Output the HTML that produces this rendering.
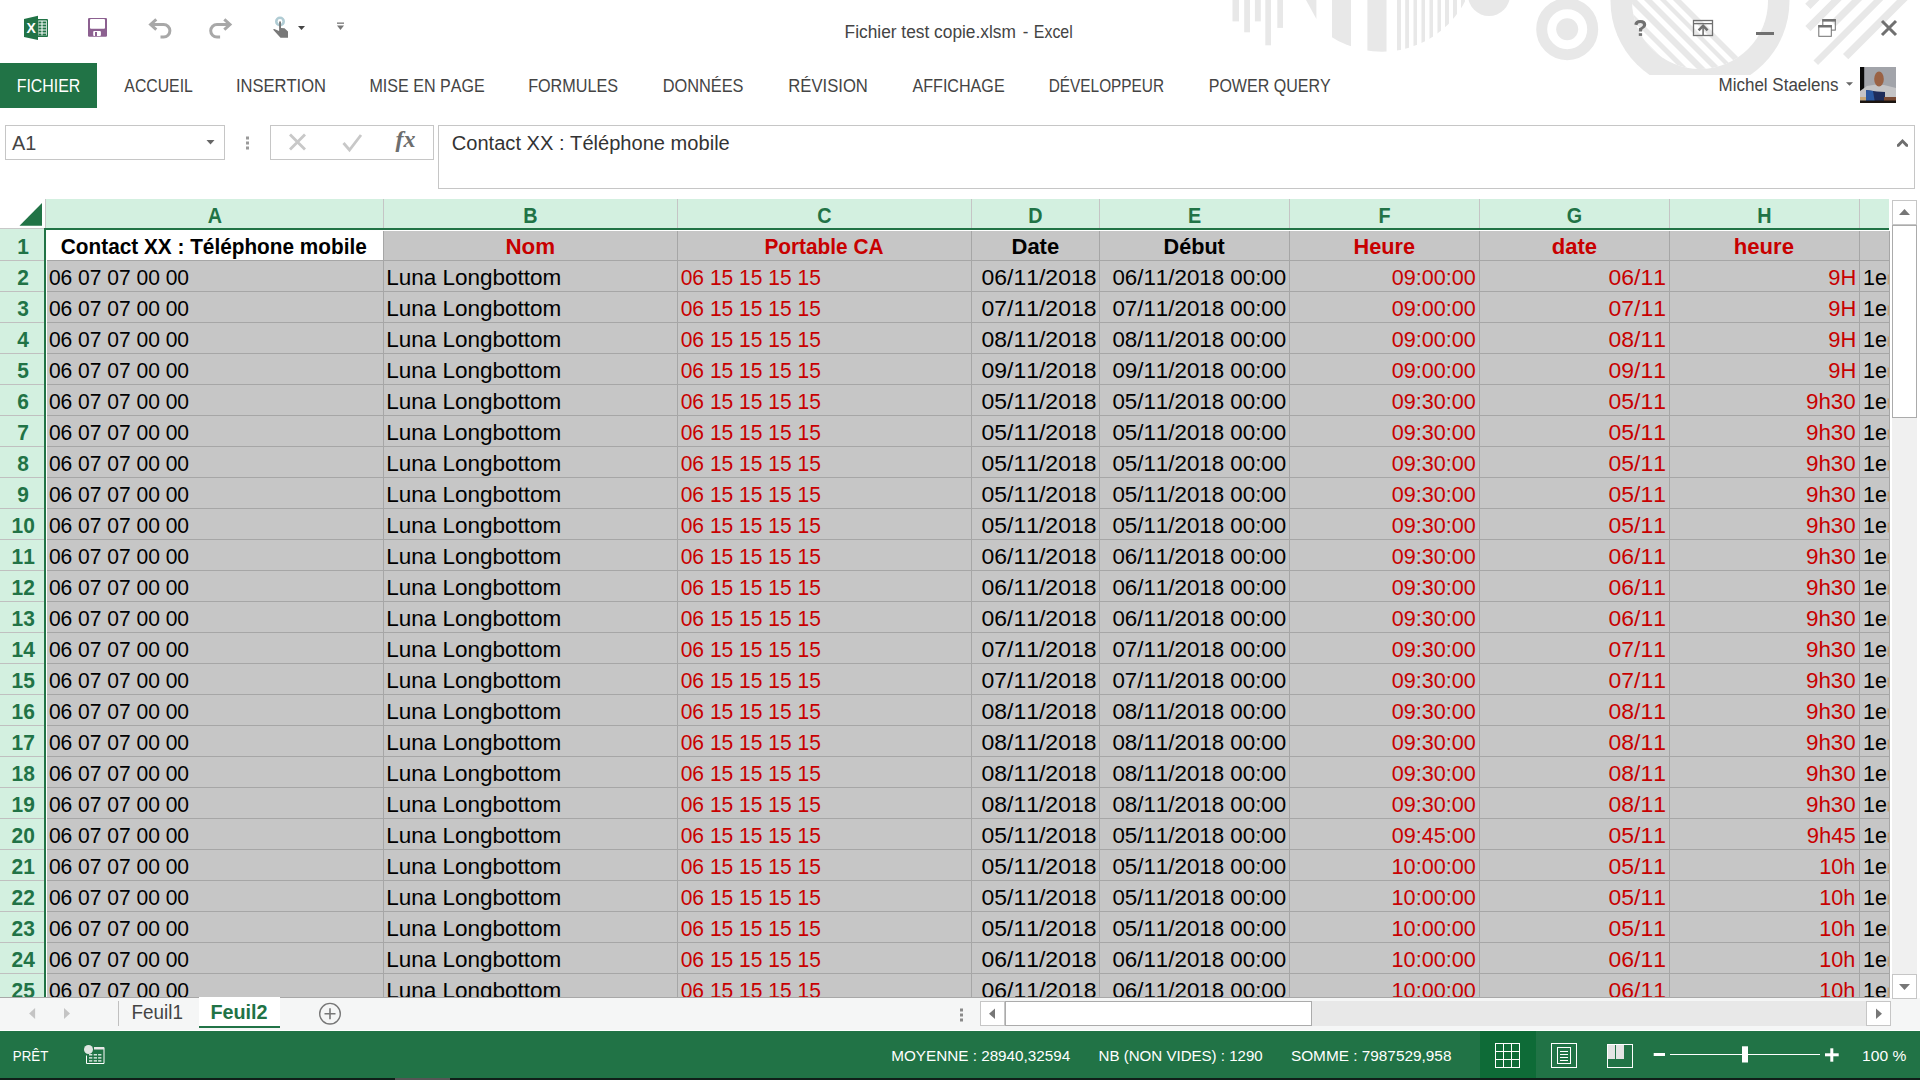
<!DOCTYPE html>
<html><head><meta charset="utf-8"><title>Excel</title>
<style>
html,body{margin:0;padding:0;background:#fff;overflow:hidden;}
svg{display:block;font-family:"Liberation Sans",sans-serif;font-kerning:none;}
svg text{white-space:pre;}
</style></head><body>
<svg width="1920" height="1080" viewBox="0 0 1920 1080">
<rect x="0" y="0" width="1920" height="1080" fill="#ffffff" />
<g><rect x="1232.5" y="0" width="6.5" height="21.4" fill="#e8e8e8"/><rect x="1244.2" y="0" width="5.7999999999999545" height="32.3" fill="#e8e8e8"/><rect x="1254.9" y="0" width="5.899999999999864" height="21.4" fill="#e8e8e8"/><rect x="1265.3" y="0" width="5.7000000000000455" height="45.3" fill="#e8e8e8"/><rect x="1277.3" y="0" width="5.7000000000000455" height="27.9" fill="#e8e8e8"/><path d="M1306 0 L1316.4 0 L1316.4 19 Z" fill="#e8e8e8"/><clipPath id="cp1"><circle cx="1382" cy="-42" r="93.7"/></clipPath><g clip-path="url(#cp1)" fill="#e8e8e8"><rect x="1332" y="-80" width="19" height="160"/><rect x="1367.4" y="-80" width="19.09999999999991" height="160"/><rect x="1397" y="-80" width="4" height="160"/><rect x="1405.2" y="-80" width="3.7999999999999545" height="160"/><rect x="1413.5" y="-80" width="3.5" height="160"/><rect x="1421.5" y="-80" width="3.5" height="160"/><rect x="1429.5" y="-80" width="3.5" height="160"/><rect x="1437.5" y="-80" width="3.5" height="160"/><rect x="1445" y="-80" width="4" height="160"/><rect x="1453" y="-80" width="4" height="160"/><rect x="1461" y="-80" width="4" height="160"/></g><circle cx="1489" cy="-5" r="21" fill="#e8e8e8"/><circle cx="1567.2" cy="29.2" r="25.5" fill="none" stroke="#e8e8e8" stroke-width="11"/><circle cx="1567.2" cy="29.2" r="11" fill="#e8e8e8"/><clipPath id="cp2b"><rect x="1500" y="-10" width="400" height="85"/></clipPath><clipPath id="cp2"><circle cx="1700" cy="1" r="68"/></clipPath><g clip-path="url(#cp2b)"><circle cx="1700" cy="1" r="89.5" fill="#e8e8e8"/><circle cx="1700" cy="1" r="68" fill="#ffffff"/><g clip-path="url(#cp2)" fill="#e8e8e8"><path d="M1300 -100 L1600 200 L1804 200 L1504 -100 Z"/><path d="M1512 -100 L1812 200 L1819 200 L1519 -100 Z"/><path d="M1528 -100 L1828 200 L1837 200 L1537 -100 Z"/><path d="M1544 -100 L1844 200 L1852 200 L1552 -100 Z"/><path d="M1560 -100 L1860 200 L1866 200 L1566 -100 Z"/><path d="M1573 -100 L1873 200 L1881 200 L1581 -100 Z"/></g></g><g fill="#e8e8e8"><path d="M1805.2 3.8 L1810.5 9.0 L1959.7 -140.3 L1954.5 -145.5 Z"/><path d="M1805.3 26.1 L1810.5 31.2 L1970.8 -129.1 L1965.7 -134.3 Z"/><path d="M1831.0 21.0 L1836.0 26.0 L1981.0 -119.0 L1976.0 -124.0 Z"/><path d="M1813.5 60.5 L1818.1 65.1 L1991.6 -108.4 L1987.0 -113.0 Z"/><path d="M1843.0 54.0 L1848.3 59.3 L2003.8 -96.2 L1998.5 -101.5 Z"/></g></g>
<path d="M24 19 L38 15.8 L38 40 L24 37 Z" fill="#217346"/>
<rect x="37" y="19" width="11" height="18" rx="1" fill="#217346"/>
<rect x="38.3" y="20.5" width="8.5" height="15" fill="#ffffff"/>
<rect x="38.5" y="21.5" width="3" height="2" fill="#217346"/><rect x="42.5" y="21.5" width="3.6" height="2" fill="#217346"/>
<rect x="38.5" y="24.5" width="3" height="2" fill="#217346"/><rect x="42.5" y="24.5" width="3.6" height="2" fill="#217346"/>
<rect x="38.5" y="27.5" width="3" height="2" fill="#217346"/><rect x="42.5" y="27.5" width="3.6" height="2" fill="#217346"/>
<rect x="38.5" y="30.5" width="3" height="2" fill="#217346"/><rect x="42.5" y="30.5" width="3.6" height="2" fill="#217346"/>
<rect x="38.5" y="33.5" width="3" height="2" fill="#217346"/><rect x="42.5" y="33.5" width="3.6" height="2" fill="#217346"/>
<text x="26.5" y="33" font-size="14" font-weight="bold" fill="#ffffff">X</text>
<rect x="88" y="17.9" width="19" height="18.9" rx="1.2" fill="#8c6090"/>
<rect x="90" y="19" width="15" height="9.7" rx="1" fill="#ffffff"/>
<rect x="93.2" y="30.9" width="7.7" height="5" rx="1" fill="#ffffff"/><rect x="95" y="32" width="2" height="4" fill="#8c6090"/>
<path d="M151 24.5 L163.6 24.5 A6.3 6.3 0 0 1 163.6 37.1 L160.5 37.1" fill="none" stroke="#a8a8a8" stroke-width="3"/>
<path d="M156.3 19.3 L150.6 24.5 L156.3 29.7" fill="none" stroke="#a8a8a8" stroke-width="3"/>
<path d="M229.6 24.5 L217 24.5 A6.3 6.3 0 0 0 217 37.1 L220.1 37.1" fill="none" stroke="#a8a8a8" stroke-width="3"/>
<path d="M224.3 19.3 L230 24.5 L224.3 29.7" fill="none" stroke="#a8a8a8" stroke-width="3"/>
<circle cx="280" cy="21.5" r="3.7" fill="none" stroke="#b0ccd4" stroke-width="2.6"/>
<path d="M279.1 22.2 Q279.1 21.3 280.05 21.3 Q281 21.3 281 22.2 L281 28 L284.5 28.3 L288 31.5 L288 37.8 L280.5 37.8 L273 29.5 L274.3 29 L279.1 31 Z" fill="#787878"/>
<path d="M298 26 L305 26 L301.5 30 Z" fill="#444444"/>
<rect x="337" y="22.5" width="7" height="1.3" fill="#777"/><path d="M337 25.5 L344 25.5 L340.5 30 Z" fill="#777777"/>
<text transform="matrix(0.9239 0 0 1 844.58 38)" font-size="18.75" font-weight="normal" fill="#444444" >Fichier test copie.xlsm</text>
<text transform="matrix(0.8956 0 0 1 1022.85 38)" font-size="18.75" font-weight="normal" fill="#444444" >-</text>
<text transform="matrix(0.8500 0 0 1 1033.79 38)" font-size="18.75" font-weight="normal" fill="#444444" >Excel</text>
<path d="M1634.3 24.6 Q1634.6 19.9 1640.3 19.9 Q1646.2 19.9 1646.2 24.6 Q1646.2 27.6 1642.3 29.4 L1642.1 31.6 L1638.9 31.6 L1638.9 28.2 Q1643 26.6 1643 24.7 Q1643 22.9 1640.3 22.9 Q1637.6 22.9 1637.4 25.3 Z" fill="#707070"/><rect x="1638.8" y="33.2" width="3.3" height="2.7" fill="#707070"/>
<rect x="1693.5" y="20.5" width="19" height="15" fill="none" stroke="#707070" stroke-width="1.3"/>
<rect x="1694" y="23" width="18" height="1.3" fill="#707070"/>
<path d="M1703.1 35.5 L1703.1 26.5" stroke="#707070" stroke-width="1.6"/><path d="M1698.6 30.3 L1703.1 25.8 L1707.6 30.3" fill="none" stroke="#707070" stroke-width="2.6"/>
<rect x="1756" y="32" width="18" height="3" fill="#707070"/>
<rect x="1822.8" y="19.6" width="12.5" height="10.5" fill="none" stroke="#707070" stroke-width="1"/><rect x="1822.3" y="19.1" width="13.5" height="2.5" fill="#707070"/>
<rect x="1818.8" y="25.5" width="12.5" height="10.8" fill="#ffffff" stroke="#707070" stroke-width="1"/><rect x="1818.3" y="25" width="13.5" height="2.5" fill="#707070"/>
<path d="M1882 21 L1896 35 M1896 21 L1882 35" stroke="#707070" stroke-width="3"/>
<rect x="0" y="63" width="97" height="45" fill="#217346" />
<text transform="matrix(0.8420 0 0 1 16.69 92)" font-size="18.90" font-weight="normal" fill="#ffffff" >FICHIER</text>
<text transform="matrix(0.8358 0 0 1 124.37 92)" font-size="18.90" font-weight="normal" fill="#444444" >ACCUEIL</text>
<text transform="matrix(0.8755 0 0 1 235.97 92)" font-size="18.90" font-weight="normal" fill="#444444" >INSERTION</text>
<text transform="matrix(0.8505 0 0 1 369.48 92)" font-size="18.90" font-weight="normal" fill="#444444" >MISE EN PAGE</text>
<text transform="matrix(0.8560 0 0 1 528.17 92)" font-size="18.90" font-weight="normal" fill="#444444" >FORMULES</text>
<text transform="matrix(0.8657 0 0 1 662.66 92)" font-size="18.90" font-weight="normal" fill="#444444" >DONNÉES</text>
<text transform="matrix(0.8818 0 0 1 788.33 92)" font-size="18.90" font-weight="normal" fill="#444444" >RÉVISION</text>
<text transform="matrix(0.8529 0 0 1 912.47 92)" font-size="18.90" font-weight="normal" fill="#444444" >AFFICHAGE</text>
<text transform="matrix(0.8139 0 0 1 1048.74 92)" font-size="18.90" font-weight="normal" fill="#444444" >DÉVELOPPEUR</text>
<text transform="matrix(0.8480 0 0 1 1208.69 92)" font-size="18.90" font-weight="normal" fill="#444444" >POWER QUERY</text>
<text transform="matrix(0.8997 0 0 1 1718.51 91)" font-size="18.90" font-weight="normal" fill="#444444" >Michel Staelens</text>
<path d="M1846 82.2 L1853 82.2 L1849.5 85.8 Z" fill="#666666"/>
<g>
<rect x="1860" y="67" width="36" height="36" fill="#a2a4aa" />
<rect x="1860" y="67" width="4.2" height="24" fill="#0a0a0a" />
<path d="M1860 91 L1867 86 L1876 84.5 L1884 85 L1896 88 L1896 97 L1860 97 Z" fill="#c4c4c6"/>
<ellipse cx="1879" cy="79" rx="4.8" ry="7.4" fill="#9a6244"/>
<path d="M1866 90 L1877 91.5 L1885 92 L1885 103 L1866 103 Z" fill="#1e2c5a"/>
<path d="M1866 90 L1873 91 L1875 103 L1866 103 Z" fill="#2a58a0"/>
<rect x="1860" y="97" width="6" height="3.5" fill="#c8a878" />
<rect x="1884" y="97" width="12" height="6" fill="#7a4a34" />
<rect x="1860" y="100.5" width="36" height="2.5" fill="#1a1410" />
</g>
<rect x="5.5" y="125.5" width="219" height="34" fill="#ffffff" stroke="#c6c6c6" stroke-width="1"/>
<text transform="matrix(0.9746 0 0 1 11.96 150)" font-size="20.35" font-weight="normal" fill="#444444" >A1</text>
<path d="M206.5 140 L214.5 140 L210.5 144.5 Z" fill="#666666"/>
<rect x="246" y="136.5" width="3" height="3" fill="#9a9a9a" />
<rect x="246" y="141.5" width="3" height="3" fill="#9a9a9a" />
<rect x="246" y="146.5" width="3" height="3" fill="#9a9a9a" />
<rect x="270.5" y="125.5" width="163" height="34" fill="#ffffff" stroke="#c6c6c6" stroke-width="1"/>
<path d="M290 134.5 L305 149.5 M305 134.5 L290 149.5" stroke="#c8c8c8" stroke-width="2.8"/>
<path d="M343.5 143 L349.5 150 L361 135" fill="none" stroke="#c8c8c8" stroke-width="2.8"/>
<text x="395.5" y="147" font-family="Liberation Serif" font-style="italic" font-weight="bold" font-size="24" fill="#6e6e6e">fx</text>
<rect x="438.5" y="125.5" width="1476" height="63" fill="#ffffff" stroke="#c6c6c6" stroke-width="1"/>
<text transform="matrix(1.0165 0 0 1 451.78 149.7)" font-size="19.77" font-weight="normal" fill="#333333" >Contact XX : Téléphone mobile</text>
<path d="M1902.5 139 L1908 144.5 L1908 146.7 L1906 146.7 L1902.5 143 L1899 146.7 L1897 146.7 L1897 144.5 Z" fill="#6e6e6e"/>
<path d="M19.5 225.8 L42 203 L42 225.8 Z" fill="#217346"/>
<rect x="0" y="228" width="45" height="1" fill="#c8c8c8" />
<rect x="45" y="199" width="1" height="29" fill="#c8c8c8" />
<rect x="46" y="199" width="1843" height="29" fill="#d3f0e0" />
<rect x="383" y="199" width="1" height="29" fill="#c5c5c5" />
<rect x="677" y="199" width="1" height="29" fill="#c5c5c5" />
<rect x="971" y="199" width="1" height="29" fill="#c5c5c5" />
<rect x="1099" y="199" width="1" height="29" fill="#c5c5c5" />
<rect x="1289" y="199" width="1" height="29" fill="#c5c5c5" />
<rect x="1479" y="199" width="1" height="29" fill="#c5c5c5" />
<rect x="1669" y="199" width="1" height="29" fill="#c5c5c5" />
<rect x="1859" y="199" width="1" height="29" fill="#c5c5c5" />
<rect x="45" y="228" width="1844" height="2" fill="#217346" />
<rect x="0" y="229" width="44" height="768" fill="#d3f0e0" />
<rect x="0" y="260" width="44" height="1" fill="#c0c0c0" />
<rect x="0" y="291" width="44" height="1" fill="#c0c0c0" />
<rect x="0" y="322" width="44" height="1" fill="#c0c0c0" />
<rect x="0" y="353" width="44" height="1" fill="#c0c0c0" />
<rect x="0" y="384" width="44" height="1" fill="#c0c0c0" />
<rect x="0" y="415" width="44" height="1" fill="#c0c0c0" />
<rect x="0" y="446" width="44" height="1" fill="#c0c0c0" />
<rect x="0" y="477" width="44" height="1" fill="#c0c0c0" />
<rect x="0" y="508" width="44" height="1" fill="#c0c0c0" />
<rect x="0" y="539" width="44" height="1" fill="#c0c0c0" />
<rect x="0" y="570" width="44" height="1" fill="#c0c0c0" />
<rect x="0" y="601" width="44" height="1" fill="#c0c0c0" />
<rect x="0" y="632" width="44" height="1" fill="#c0c0c0" />
<rect x="0" y="663" width="44" height="1" fill="#c0c0c0" />
<rect x="0" y="694" width="44" height="1" fill="#c0c0c0" />
<rect x="0" y="725" width="44" height="1" fill="#c0c0c0" />
<rect x="0" y="756" width="44" height="1" fill="#c0c0c0" />
<rect x="0" y="787" width="44" height="1" fill="#c0c0c0" />
<rect x="0" y="818" width="44" height="1" fill="#c0c0c0" />
<rect x="0" y="849" width="44" height="1" fill="#c0c0c0" />
<rect x="0" y="880" width="44" height="1" fill="#c0c0c0" />
<rect x="0" y="911" width="44" height="1" fill="#c0c0c0" />
<rect x="0" y="942" width="44" height="1" fill="#c0c0c0" />
<rect x="0" y="973" width="44" height="1" fill="#c0c0c0" />
<rect x="44" y="228" width="2" height="769" fill="#217346" />
<rect x="46" y="230" width="1843" height="767" fill="#ffffff" />
<rect x="47" y="231" width="1842" height="766" fill="#c6c6c6" />
<rect x="47" y="231" width="336" height="29" fill="#ffffff" />
<rect x="383" y="231" width="1" height="766" fill="#a6a6a6" />
<rect x="677" y="231" width="1" height="766" fill="#a6a6a6" />
<rect x="971" y="231" width="1" height="766" fill="#a6a6a6" />
<rect x="1099" y="231" width="1" height="766" fill="#a6a6a6" />
<rect x="1289" y="231" width="1" height="766" fill="#a6a6a6" />
<rect x="1479" y="231" width="1" height="766" fill="#a6a6a6" />
<rect x="1669" y="231" width="1" height="766" fill="#a6a6a6" />
<rect x="1859" y="231" width="1" height="766" fill="#a6a6a6" />
<rect x="1889" y="231" width="1" height="766" fill="#a6a6a6" />
<rect x="47" y="260" width="1842" height="1" fill="#a6a6a6" />
<rect x="47" y="291" width="1842" height="1" fill="#a6a6a6" />
<rect x="47" y="322" width="1842" height="1" fill="#a6a6a6" />
<rect x="47" y="353" width="1842" height="1" fill="#a6a6a6" />
<rect x="47" y="384" width="1842" height="1" fill="#a6a6a6" />
<rect x="47" y="415" width="1842" height="1" fill="#a6a6a6" />
<rect x="47" y="446" width="1842" height="1" fill="#a6a6a6" />
<rect x="47" y="477" width="1842" height="1" fill="#a6a6a6" />
<rect x="47" y="508" width="1842" height="1" fill="#a6a6a6" />
<rect x="47" y="539" width="1842" height="1" fill="#a6a6a6" />
<rect x="47" y="570" width="1842" height="1" fill="#a6a6a6" />
<rect x="47" y="601" width="1842" height="1" fill="#a6a6a6" />
<rect x="47" y="632" width="1842" height="1" fill="#a6a6a6" />
<rect x="47" y="663" width="1842" height="1" fill="#a6a6a6" />
<rect x="47" y="694" width="1842" height="1" fill="#a6a6a6" />
<rect x="47" y="725" width="1842" height="1" fill="#a6a6a6" />
<rect x="47" y="756" width="1842" height="1" fill="#a6a6a6" />
<rect x="47" y="787" width="1842" height="1" fill="#a6a6a6" />
<rect x="47" y="818" width="1842" height="1" fill="#a6a6a6" />
<rect x="47" y="849" width="1842" height="1" fill="#a6a6a6" />
<rect x="47" y="880" width="1842" height="1" fill="#a6a6a6" />
<rect x="47" y="911" width="1842" height="1" fill="#a6a6a6" />
<rect x="47" y="942" width="1842" height="1" fill="#a6a6a6" />
<rect x="47" y="973" width="1842" height="1" fill="#a6a6a6" />
<rect x="0" y="997" width="1890" height="1" fill="#a8a8a8" />
<text x="215.0" y="223" text-anchor="middle" font-size="21.5" font-weight="bold" fill="#217346" transform="translate(215.0 0) scale(0.92 1) translate(-215.0 0)">A</text>
<text x="530.5" y="223" text-anchor="middle" font-size="21.5" font-weight="bold" fill="#217346" transform="translate(530.5 0) scale(0.92 1) translate(-530.5 0)">B</text>
<text x="824.5" y="223" text-anchor="middle" font-size="21.5" font-weight="bold" fill="#217346" transform="translate(824.5 0) scale(0.92 1) translate(-824.5 0)">C</text>
<text x="1035.5" y="223" text-anchor="middle" font-size="21.5" font-weight="bold" fill="#217346" transform="translate(1035.5 0) scale(0.92 1) translate(-1035.5 0)">D</text>
<text x="1194.5" y="223" text-anchor="middle" font-size="21.5" font-weight="bold" fill="#217346" transform="translate(1194.5 0) scale(0.92 1) translate(-1194.5 0)">E</text>
<text x="1384.5" y="223" text-anchor="middle" font-size="21.5" font-weight="bold" fill="#217346" transform="translate(1384.5 0) scale(0.92 1) translate(-1384.5 0)">F</text>
<text x="1574.5" y="223" text-anchor="middle" font-size="21.5" font-weight="bold" fill="#217346" transform="translate(1574.5 0) scale(0.92 1) translate(-1574.5 0)">G</text>
<text x="1764.5" y="223" text-anchor="middle" font-size="21.5" font-weight="bold" fill="#217346" transform="translate(1764.5 0) scale(0.92 1) translate(-1764.5 0)">H</text>
<clipPath id="rhclip"><rect x="0" y="229" width="44" height="768"/></clipPath>
<g clip-path="url(#rhclip)">
<text x="23.2" y="254.5" text-anchor="middle" font-size="21.8" font-weight="bold" fill="#217346" transform="translate(23.2 0) scale(0.96 1) translate(-23.2 0)">1</text>
<text x="23.2" y="285.5" text-anchor="middle" font-size="21.8" font-weight="bold" fill="#217346" transform="translate(23.2 0) scale(0.96 1) translate(-23.2 0)">2</text>
<text x="23.2" y="316.5" text-anchor="middle" font-size="21.8" font-weight="bold" fill="#217346" transform="translate(23.2 0) scale(0.96 1) translate(-23.2 0)">3</text>
<text x="23.2" y="347.5" text-anchor="middle" font-size="21.8" font-weight="bold" fill="#217346" transform="translate(23.2 0) scale(0.96 1) translate(-23.2 0)">4</text>
<text x="23.2" y="378.5" text-anchor="middle" font-size="21.8" font-weight="bold" fill="#217346" transform="translate(23.2 0) scale(0.96 1) translate(-23.2 0)">5</text>
<text x="23.2" y="409.5" text-anchor="middle" font-size="21.8" font-weight="bold" fill="#217346" transform="translate(23.2 0) scale(0.96 1) translate(-23.2 0)">6</text>
<text x="23.2" y="440.5" text-anchor="middle" font-size="21.8" font-weight="bold" fill="#217346" transform="translate(23.2 0) scale(0.96 1) translate(-23.2 0)">7</text>
<text x="23.2" y="471.5" text-anchor="middle" font-size="21.8" font-weight="bold" fill="#217346" transform="translate(23.2 0) scale(0.96 1) translate(-23.2 0)">8</text>
<text x="23.2" y="502.5" text-anchor="middle" font-size="21.8" font-weight="bold" fill="#217346" transform="translate(23.2 0) scale(0.96 1) translate(-23.2 0)">9</text>
<text x="23.2" y="533.5" text-anchor="middle" font-size="21.8" font-weight="bold" fill="#217346" transform="translate(23.2 0) scale(0.96 1) translate(-23.2 0)">10</text>
<text x="23.2" y="564.5" text-anchor="middle" font-size="21.8" font-weight="bold" fill="#217346" transform="translate(23.2 0) scale(0.96 1) translate(-23.2 0)">11</text>
<text x="23.2" y="595.5" text-anchor="middle" font-size="21.8" font-weight="bold" fill="#217346" transform="translate(23.2 0) scale(0.96 1) translate(-23.2 0)">12</text>
<text x="23.2" y="626.5" text-anchor="middle" font-size="21.8" font-weight="bold" fill="#217346" transform="translate(23.2 0) scale(0.96 1) translate(-23.2 0)">13</text>
<text x="23.2" y="657.5" text-anchor="middle" font-size="21.8" font-weight="bold" fill="#217346" transform="translate(23.2 0) scale(0.96 1) translate(-23.2 0)">14</text>
<text x="23.2" y="688.5" text-anchor="middle" font-size="21.8" font-weight="bold" fill="#217346" transform="translate(23.2 0) scale(0.96 1) translate(-23.2 0)">15</text>
<text x="23.2" y="719.5" text-anchor="middle" font-size="21.8" font-weight="bold" fill="#217346" transform="translate(23.2 0) scale(0.96 1) translate(-23.2 0)">16</text>
<text x="23.2" y="750.5" text-anchor="middle" font-size="21.8" font-weight="bold" fill="#217346" transform="translate(23.2 0) scale(0.96 1) translate(-23.2 0)">17</text>
<text x="23.2" y="781.5" text-anchor="middle" font-size="21.8" font-weight="bold" fill="#217346" transform="translate(23.2 0) scale(0.96 1) translate(-23.2 0)">18</text>
<text x="23.2" y="812.5" text-anchor="middle" font-size="21.8" font-weight="bold" fill="#217346" transform="translate(23.2 0) scale(0.96 1) translate(-23.2 0)">19</text>
<text x="23.2" y="843.5" text-anchor="middle" font-size="21.8" font-weight="bold" fill="#217346" transform="translate(23.2 0) scale(0.96 1) translate(-23.2 0)">20</text>
<text x="23.2" y="874.5" text-anchor="middle" font-size="21.8" font-weight="bold" fill="#217346" transform="translate(23.2 0) scale(0.96 1) translate(-23.2 0)">21</text>
<text x="23.2" y="905.5" text-anchor="middle" font-size="21.8" font-weight="bold" fill="#217346" transform="translate(23.2 0) scale(0.96 1) translate(-23.2 0)">22</text>
<text x="23.2" y="936.5" text-anchor="middle" font-size="21.8" font-weight="bold" fill="#217346" transform="translate(23.2 0) scale(0.96 1) translate(-23.2 0)">23</text>
<text x="23.2" y="967.5" text-anchor="middle" font-size="21.8" font-weight="bold" fill="#217346" transform="translate(23.2 0) scale(0.96 1) translate(-23.2 0)">24</text>
<text x="23.2" y="998.5" text-anchor="middle" font-size="21.8" font-weight="bold" fill="#217346" transform="translate(23.2 0) scale(0.96 1) translate(-23.2 0)">25</text>
</g>
<text transform="matrix(0.9666 0 0 1 60.85 253.5)" font-size="21.51" font-weight="bold" fill="#000000" >Contact XX : Téléphone mobile</text>
<text transform="matrix(1.0404 0 0 1 505.40 253.5)" font-size="21.51" font-weight="bold" fill="#c80000" >Nom</text>
<text transform="matrix(0.9685 0 0 1 764.41 253.5)" font-size="21.51" font-weight="bold" fill="#c80000" >Portable CA</text>
<text transform="matrix(1.0213 0 0 1 1011.53 253.5)" font-size="21.51" font-weight="bold" fill="#000000" >Date</text>
<text transform="matrix(1.0060 0 0 1 1163.55 253.5)" font-size="21.51" font-weight="bold" fill="#000000" >Début</text>
<text transform="matrix(1.0085 0 0 1 1353.55 253.5)" font-size="21.51" font-weight="bold" fill="#c80000" >Heure</text>
<text transform="matrix(1.0255 0 0 1 1551.80 253.5)" font-size="21.51" font-weight="bold" fill="#c80000" >date</text>
<text transform="matrix(1.0294 0 0 1 1733.75 253.5)" font-size="21.51" font-weight="bold" fill="#c80000" >heure</text>
<clipPath id="gridclip"><rect x="46" y="230" width="1843" height="767"/></clipPath>
<g clip-path="url(#gridclip)">
<text transform="matrix(0.9770 0 0 1 48.88 284.5)" font-size="21.51" font-weight="normal" fill="#000000" >06 07 07 00 00</text>
<text transform="matrix(1.0464 0 0 1 386.25 284.5)" font-size="21.51" font-weight="normal" fill="#000000" >Luna Longbottom</text>
<text transform="matrix(0.9774 0 0 1 680.68 284.5)" font-size="21.51" font-weight="normal" fill="#c80000" >06 15 15 15 15</text>
<text transform="matrix(1.0681 0 0 1 981.50 284.5)" font-size="21.51" font-weight="normal" fill="#000000" >06/11/2018</text>
<text transform="matrix(1.0386 0 0 1 1112.43 284.5)" font-size="21.51" font-weight="normal" fill="#000000" >06/11/2018 00:00</text>
<text transform="matrix(1.0030 0 0 1 1391.86 284.5)" font-size="21.51" font-weight="normal" fill="#c80000" >09:00:00</text>
<text transform="matrix(1.0666 0 0 1 1608.60 284.5)" font-size="21.51" font-weight="normal" fill="#c80000" >06/11</text>
<text transform="matrix(1.0187 0 0 1 1828.37 284.5)" font-size="21.51" font-weight="normal" fill="#c80000" >9H</text>
<text transform="matrix(1.0031 0 0 1 1862.96 284.5)" font-size="21.51" font-weight="normal" fill="#000000" >1e</text>
<rect x="1887.5" y="274.5" width="1.5" height="10" fill="#c8a070" />
<text transform="matrix(0.9770 0 0 1 48.88 315.5)" font-size="21.51" font-weight="normal" fill="#000000" >06 07 07 00 00</text>
<text transform="matrix(1.0464 0 0 1 386.25 315.5)" font-size="21.51" font-weight="normal" fill="#000000" >Luna Longbottom</text>
<text transform="matrix(0.9774 0 0 1 680.68 315.5)" font-size="21.51" font-weight="normal" fill="#c80000" >06 15 15 15 15</text>
<text transform="matrix(1.0681 0 0 1 981.50 315.5)" font-size="21.51" font-weight="normal" fill="#000000" >07/11/2018</text>
<text transform="matrix(1.0386 0 0 1 1112.43 315.5)" font-size="21.51" font-weight="normal" fill="#000000" >07/11/2018 00:00</text>
<text transform="matrix(1.0030 0 0 1 1391.86 315.5)" font-size="21.51" font-weight="normal" fill="#c80000" >09:00:00</text>
<text transform="matrix(1.0666 0 0 1 1608.60 315.5)" font-size="21.51" font-weight="normal" fill="#c80000" >07/11</text>
<text transform="matrix(1.0187 0 0 1 1828.37 315.5)" font-size="21.51" font-weight="normal" fill="#c80000" >9H</text>
<text transform="matrix(1.0031 0 0 1 1862.96 315.5)" font-size="21.51" font-weight="normal" fill="#000000" >1e</text>
<rect x="1887.5" y="305.5" width="1.5" height="10" fill="#c8a070" />
<text transform="matrix(0.9770 0 0 1 48.88 346.5)" font-size="21.51" font-weight="normal" fill="#000000" >06 07 07 00 00</text>
<text transform="matrix(1.0464 0 0 1 386.25 346.5)" font-size="21.51" font-weight="normal" fill="#000000" >Luna Longbottom</text>
<text transform="matrix(0.9774 0 0 1 680.68 346.5)" font-size="21.51" font-weight="normal" fill="#c80000" >06 15 15 15 15</text>
<text transform="matrix(1.0681 0 0 1 981.50 346.5)" font-size="21.51" font-weight="normal" fill="#000000" >08/11/2018</text>
<text transform="matrix(1.0386 0 0 1 1112.43 346.5)" font-size="21.51" font-weight="normal" fill="#000000" >08/11/2018 00:00</text>
<text transform="matrix(1.0030 0 0 1 1391.86 346.5)" font-size="21.51" font-weight="normal" fill="#c80000" >09:00:00</text>
<text transform="matrix(1.0666 0 0 1 1608.60 346.5)" font-size="21.51" font-weight="normal" fill="#c80000" >08/11</text>
<text transform="matrix(1.0187 0 0 1 1828.37 346.5)" font-size="21.51" font-weight="normal" fill="#c80000" >9H</text>
<text transform="matrix(1.0031 0 0 1 1862.96 346.5)" font-size="21.51" font-weight="normal" fill="#000000" >1e</text>
<rect x="1887.5" y="336.5" width="1.5" height="10" fill="#c8a070" />
<text transform="matrix(0.9770 0 0 1 48.88 377.5)" font-size="21.51" font-weight="normal" fill="#000000" >06 07 07 00 00</text>
<text transform="matrix(1.0464 0 0 1 386.25 377.5)" font-size="21.51" font-weight="normal" fill="#000000" >Luna Longbottom</text>
<text transform="matrix(0.9774 0 0 1 680.68 377.5)" font-size="21.51" font-weight="normal" fill="#c80000" >06 15 15 15 15</text>
<text transform="matrix(1.0681 0 0 1 981.50 377.5)" font-size="21.51" font-weight="normal" fill="#000000" >09/11/2018</text>
<text transform="matrix(1.0386 0 0 1 1112.43 377.5)" font-size="21.51" font-weight="normal" fill="#000000" >09/11/2018 00:00</text>
<text transform="matrix(1.0030 0 0 1 1391.86 377.5)" font-size="21.51" font-weight="normal" fill="#c80000" >09:00:00</text>
<text transform="matrix(1.0666 0 0 1 1608.60 377.5)" font-size="21.51" font-weight="normal" fill="#c80000" >09/11</text>
<text transform="matrix(1.0187 0 0 1 1828.37 377.5)" font-size="21.51" font-weight="normal" fill="#c80000" >9H</text>
<text transform="matrix(1.0031 0 0 1 1862.96 377.5)" font-size="21.51" font-weight="normal" fill="#000000" >1e</text>
<rect x="1887.5" y="367.5" width="1.5" height="10" fill="#c8a070" />
<text transform="matrix(0.9770 0 0 1 48.88 408.5)" font-size="21.51" font-weight="normal" fill="#000000" >06 07 07 00 00</text>
<text transform="matrix(1.0464 0 0 1 386.25 408.5)" font-size="21.51" font-weight="normal" fill="#000000" >Luna Longbottom</text>
<text transform="matrix(0.9774 0 0 1 680.68 408.5)" font-size="21.51" font-weight="normal" fill="#c80000" >06 15 15 15 15</text>
<text transform="matrix(1.0681 0 0 1 981.50 408.5)" font-size="21.51" font-weight="normal" fill="#000000" >05/11/2018</text>
<text transform="matrix(1.0386 0 0 1 1112.43 408.5)" font-size="21.51" font-weight="normal" fill="#000000" >05/11/2018 00:00</text>
<text transform="matrix(1.0030 0 0 1 1391.86 408.5)" font-size="21.51" font-weight="normal" fill="#c80000" >09:30:00</text>
<text transform="matrix(1.0666 0 0 1 1608.60 408.5)" font-size="21.51" font-weight="normal" fill="#c80000" >05/11</text>
<text transform="matrix(1.0411 0 0 1 1805.95 408.5)" font-size="21.51" font-weight="normal" fill="#c80000" >9h30</text>
<text transform="matrix(1.0031 0 0 1 1862.96 408.5)" font-size="21.51" font-weight="normal" fill="#000000" >1e</text>
<rect x="1887.5" y="398.5" width="1.5" height="10" fill="#c8a070" />
<text transform="matrix(0.9770 0 0 1 48.88 439.5)" font-size="21.51" font-weight="normal" fill="#000000" >06 07 07 00 00</text>
<text transform="matrix(1.0464 0 0 1 386.25 439.5)" font-size="21.51" font-weight="normal" fill="#000000" >Luna Longbottom</text>
<text transform="matrix(0.9774 0 0 1 680.68 439.5)" font-size="21.51" font-weight="normal" fill="#c80000" >06 15 15 15 15</text>
<text transform="matrix(1.0681 0 0 1 981.50 439.5)" font-size="21.51" font-weight="normal" fill="#000000" >05/11/2018</text>
<text transform="matrix(1.0386 0 0 1 1112.43 439.5)" font-size="21.51" font-weight="normal" fill="#000000" >05/11/2018 00:00</text>
<text transform="matrix(1.0030 0 0 1 1391.86 439.5)" font-size="21.51" font-weight="normal" fill="#c80000" >09:30:00</text>
<text transform="matrix(1.0666 0 0 1 1608.60 439.5)" font-size="21.51" font-weight="normal" fill="#c80000" >05/11</text>
<text transform="matrix(1.0411 0 0 1 1805.95 439.5)" font-size="21.51" font-weight="normal" fill="#c80000" >9h30</text>
<text transform="matrix(1.0031 0 0 1 1862.96 439.5)" font-size="21.51" font-weight="normal" fill="#000000" >1e</text>
<rect x="1887.5" y="429.5" width="1.5" height="10" fill="#c8a070" />
<text transform="matrix(0.9770 0 0 1 48.88 470.5)" font-size="21.51" font-weight="normal" fill="#000000" >06 07 07 00 00</text>
<text transform="matrix(1.0464 0 0 1 386.25 470.5)" font-size="21.51" font-weight="normal" fill="#000000" >Luna Longbottom</text>
<text transform="matrix(0.9774 0 0 1 680.68 470.5)" font-size="21.51" font-weight="normal" fill="#c80000" >06 15 15 15 15</text>
<text transform="matrix(1.0681 0 0 1 981.50 470.5)" font-size="21.51" font-weight="normal" fill="#000000" >05/11/2018</text>
<text transform="matrix(1.0386 0 0 1 1112.43 470.5)" font-size="21.51" font-weight="normal" fill="#000000" >05/11/2018 00:00</text>
<text transform="matrix(1.0030 0 0 1 1391.86 470.5)" font-size="21.51" font-weight="normal" fill="#c80000" >09:30:00</text>
<text transform="matrix(1.0666 0 0 1 1608.60 470.5)" font-size="21.51" font-weight="normal" fill="#c80000" >05/11</text>
<text transform="matrix(1.0411 0 0 1 1805.95 470.5)" font-size="21.51" font-weight="normal" fill="#c80000" >9h30</text>
<text transform="matrix(1.0031 0 0 1 1862.96 470.5)" font-size="21.51" font-weight="normal" fill="#000000" >1e</text>
<rect x="1887.5" y="460.5" width="1.5" height="10" fill="#c8a070" />
<text transform="matrix(0.9770 0 0 1 48.88 501.5)" font-size="21.51" font-weight="normal" fill="#000000" >06 07 07 00 00</text>
<text transform="matrix(1.0464 0 0 1 386.25 501.5)" font-size="21.51" font-weight="normal" fill="#000000" >Luna Longbottom</text>
<text transform="matrix(0.9774 0 0 1 680.68 501.5)" font-size="21.51" font-weight="normal" fill="#c80000" >06 15 15 15 15</text>
<text transform="matrix(1.0681 0 0 1 981.50 501.5)" font-size="21.51" font-weight="normal" fill="#000000" >05/11/2018</text>
<text transform="matrix(1.0386 0 0 1 1112.43 501.5)" font-size="21.51" font-weight="normal" fill="#000000" >05/11/2018 00:00</text>
<text transform="matrix(1.0030 0 0 1 1391.86 501.5)" font-size="21.51" font-weight="normal" fill="#c80000" >09:30:00</text>
<text transform="matrix(1.0666 0 0 1 1608.60 501.5)" font-size="21.51" font-weight="normal" fill="#c80000" >05/11</text>
<text transform="matrix(1.0411 0 0 1 1805.95 501.5)" font-size="21.51" font-weight="normal" fill="#c80000" >9h30</text>
<text transform="matrix(1.0031 0 0 1 1862.96 501.5)" font-size="21.51" font-weight="normal" fill="#000000" >1e</text>
<rect x="1887.5" y="491.5" width="1.5" height="10" fill="#c8a070" />
<text transform="matrix(0.9770 0 0 1 48.88 532.5)" font-size="21.51" font-weight="normal" fill="#000000" >06 07 07 00 00</text>
<text transform="matrix(1.0464 0 0 1 386.25 532.5)" font-size="21.51" font-weight="normal" fill="#000000" >Luna Longbottom</text>
<text transform="matrix(0.9774 0 0 1 680.68 532.5)" font-size="21.51" font-weight="normal" fill="#c80000" >06 15 15 15 15</text>
<text transform="matrix(1.0681 0 0 1 981.50 532.5)" font-size="21.51" font-weight="normal" fill="#000000" >05/11/2018</text>
<text transform="matrix(1.0386 0 0 1 1112.43 532.5)" font-size="21.51" font-weight="normal" fill="#000000" >05/11/2018 00:00</text>
<text transform="matrix(1.0030 0 0 1 1391.86 532.5)" font-size="21.51" font-weight="normal" fill="#c80000" >09:30:00</text>
<text transform="matrix(1.0666 0 0 1 1608.60 532.5)" font-size="21.51" font-weight="normal" fill="#c80000" >05/11</text>
<text transform="matrix(1.0411 0 0 1 1805.95 532.5)" font-size="21.51" font-weight="normal" fill="#c80000" >9h30</text>
<text transform="matrix(1.0031 0 0 1 1862.96 532.5)" font-size="21.51" font-weight="normal" fill="#000000" >1e</text>
<rect x="1887.5" y="522.5" width="1.5" height="10" fill="#c8a070" />
<text transform="matrix(0.9770 0 0 1 48.88 563.5)" font-size="21.51" font-weight="normal" fill="#000000" >06 07 07 00 00</text>
<text transform="matrix(1.0464 0 0 1 386.25 563.5)" font-size="21.51" font-weight="normal" fill="#000000" >Luna Longbottom</text>
<text transform="matrix(0.9774 0 0 1 680.68 563.5)" font-size="21.51" font-weight="normal" fill="#c80000" >06 15 15 15 15</text>
<text transform="matrix(1.0681 0 0 1 981.50 563.5)" font-size="21.51" font-weight="normal" fill="#000000" >06/11/2018</text>
<text transform="matrix(1.0386 0 0 1 1112.43 563.5)" font-size="21.51" font-weight="normal" fill="#000000" >06/11/2018 00:00</text>
<text transform="matrix(1.0030 0 0 1 1391.86 563.5)" font-size="21.51" font-weight="normal" fill="#c80000" >09:30:00</text>
<text transform="matrix(1.0666 0 0 1 1608.60 563.5)" font-size="21.51" font-weight="normal" fill="#c80000" >06/11</text>
<text transform="matrix(1.0411 0 0 1 1805.95 563.5)" font-size="21.51" font-weight="normal" fill="#c80000" >9h30</text>
<text transform="matrix(1.0031 0 0 1 1862.96 563.5)" font-size="21.51" font-weight="normal" fill="#000000" >1e</text>
<rect x="1887.5" y="553.5" width="1.5" height="10" fill="#c8a070" />
<text transform="matrix(0.9770 0 0 1 48.88 594.5)" font-size="21.51" font-weight="normal" fill="#000000" >06 07 07 00 00</text>
<text transform="matrix(1.0464 0 0 1 386.25 594.5)" font-size="21.51" font-weight="normal" fill="#000000" >Luna Longbottom</text>
<text transform="matrix(0.9774 0 0 1 680.68 594.5)" font-size="21.51" font-weight="normal" fill="#c80000" >06 15 15 15 15</text>
<text transform="matrix(1.0681 0 0 1 981.50 594.5)" font-size="21.51" font-weight="normal" fill="#000000" >06/11/2018</text>
<text transform="matrix(1.0386 0 0 1 1112.43 594.5)" font-size="21.51" font-weight="normal" fill="#000000" >06/11/2018 00:00</text>
<text transform="matrix(1.0030 0 0 1 1391.86 594.5)" font-size="21.51" font-weight="normal" fill="#c80000" >09:30:00</text>
<text transform="matrix(1.0666 0 0 1 1608.60 594.5)" font-size="21.51" font-weight="normal" fill="#c80000" >06/11</text>
<text transform="matrix(1.0411 0 0 1 1805.95 594.5)" font-size="21.51" font-weight="normal" fill="#c80000" >9h30</text>
<text transform="matrix(1.0031 0 0 1 1862.96 594.5)" font-size="21.51" font-weight="normal" fill="#000000" >1e</text>
<rect x="1887.5" y="584.5" width="1.5" height="10" fill="#c8a070" />
<text transform="matrix(0.9770 0 0 1 48.88 625.5)" font-size="21.51" font-weight="normal" fill="#000000" >06 07 07 00 00</text>
<text transform="matrix(1.0464 0 0 1 386.25 625.5)" font-size="21.51" font-weight="normal" fill="#000000" >Luna Longbottom</text>
<text transform="matrix(0.9774 0 0 1 680.68 625.5)" font-size="21.51" font-weight="normal" fill="#c80000" >06 15 15 15 15</text>
<text transform="matrix(1.0681 0 0 1 981.50 625.5)" font-size="21.51" font-weight="normal" fill="#000000" >06/11/2018</text>
<text transform="matrix(1.0386 0 0 1 1112.43 625.5)" font-size="21.51" font-weight="normal" fill="#000000" >06/11/2018 00:00</text>
<text transform="matrix(1.0030 0 0 1 1391.86 625.5)" font-size="21.51" font-weight="normal" fill="#c80000" >09:30:00</text>
<text transform="matrix(1.0666 0 0 1 1608.60 625.5)" font-size="21.51" font-weight="normal" fill="#c80000" >06/11</text>
<text transform="matrix(1.0411 0 0 1 1805.95 625.5)" font-size="21.51" font-weight="normal" fill="#c80000" >9h30</text>
<text transform="matrix(1.0031 0 0 1 1862.96 625.5)" font-size="21.51" font-weight="normal" fill="#000000" >1e</text>
<rect x="1887.5" y="615.5" width="1.5" height="10" fill="#c8a070" />
<text transform="matrix(0.9770 0 0 1 48.88 656.5)" font-size="21.51" font-weight="normal" fill="#000000" >06 07 07 00 00</text>
<text transform="matrix(1.0464 0 0 1 386.25 656.5)" font-size="21.51" font-weight="normal" fill="#000000" >Luna Longbottom</text>
<text transform="matrix(0.9774 0 0 1 680.68 656.5)" font-size="21.51" font-weight="normal" fill="#c80000" >06 15 15 15 15</text>
<text transform="matrix(1.0681 0 0 1 981.50 656.5)" font-size="21.51" font-weight="normal" fill="#000000" >07/11/2018</text>
<text transform="matrix(1.0386 0 0 1 1112.43 656.5)" font-size="21.51" font-weight="normal" fill="#000000" >07/11/2018 00:00</text>
<text transform="matrix(1.0030 0 0 1 1391.86 656.5)" font-size="21.51" font-weight="normal" fill="#c80000" >09:30:00</text>
<text transform="matrix(1.0666 0 0 1 1608.60 656.5)" font-size="21.51" font-weight="normal" fill="#c80000" >07/11</text>
<text transform="matrix(1.0411 0 0 1 1805.95 656.5)" font-size="21.51" font-weight="normal" fill="#c80000" >9h30</text>
<text transform="matrix(1.0031 0 0 1 1862.96 656.5)" font-size="21.51" font-weight="normal" fill="#000000" >1e</text>
<rect x="1887.5" y="646.5" width="1.5" height="10" fill="#c8a070" />
<text transform="matrix(0.9770 0 0 1 48.88 687.5)" font-size="21.51" font-weight="normal" fill="#000000" >06 07 07 00 00</text>
<text transform="matrix(1.0464 0 0 1 386.25 687.5)" font-size="21.51" font-weight="normal" fill="#000000" >Luna Longbottom</text>
<text transform="matrix(0.9774 0 0 1 680.68 687.5)" font-size="21.51" font-weight="normal" fill="#c80000" >06 15 15 15 15</text>
<text transform="matrix(1.0681 0 0 1 981.50 687.5)" font-size="21.51" font-weight="normal" fill="#000000" >07/11/2018</text>
<text transform="matrix(1.0386 0 0 1 1112.43 687.5)" font-size="21.51" font-weight="normal" fill="#000000" >07/11/2018 00:00</text>
<text transform="matrix(1.0030 0 0 1 1391.86 687.5)" font-size="21.51" font-weight="normal" fill="#c80000" >09:30:00</text>
<text transform="matrix(1.0666 0 0 1 1608.60 687.5)" font-size="21.51" font-weight="normal" fill="#c80000" >07/11</text>
<text transform="matrix(1.0411 0 0 1 1805.95 687.5)" font-size="21.51" font-weight="normal" fill="#c80000" >9h30</text>
<text transform="matrix(1.0031 0 0 1 1862.96 687.5)" font-size="21.51" font-weight="normal" fill="#000000" >1e</text>
<rect x="1887.5" y="677.5" width="1.5" height="10" fill="#c8a070" />
<text transform="matrix(0.9770 0 0 1 48.88 718.5)" font-size="21.51" font-weight="normal" fill="#000000" >06 07 07 00 00</text>
<text transform="matrix(1.0464 0 0 1 386.25 718.5)" font-size="21.51" font-weight="normal" fill="#000000" >Luna Longbottom</text>
<text transform="matrix(0.9774 0 0 1 680.68 718.5)" font-size="21.51" font-weight="normal" fill="#c80000" >06 15 15 15 15</text>
<text transform="matrix(1.0681 0 0 1 981.50 718.5)" font-size="21.51" font-weight="normal" fill="#000000" >08/11/2018</text>
<text transform="matrix(1.0386 0 0 1 1112.43 718.5)" font-size="21.51" font-weight="normal" fill="#000000" >08/11/2018 00:00</text>
<text transform="matrix(1.0030 0 0 1 1391.86 718.5)" font-size="21.51" font-weight="normal" fill="#c80000" >09:30:00</text>
<text transform="matrix(1.0666 0 0 1 1608.60 718.5)" font-size="21.51" font-weight="normal" fill="#c80000" >08/11</text>
<text transform="matrix(1.0411 0 0 1 1805.95 718.5)" font-size="21.51" font-weight="normal" fill="#c80000" >9h30</text>
<text transform="matrix(1.0031 0 0 1 1862.96 718.5)" font-size="21.51" font-weight="normal" fill="#000000" >1e</text>
<rect x="1887.5" y="708.5" width="1.5" height="10" fill="#c8a070" />
<text transform="matrix(0.9770 0 0 1 48.88 749.5)" font-size="21.51" font-weight="normal" fill="#000000" >06 07 07 00 00</text>
<text transform="matrix(1.0464 0 0 1 386.25 749.5)" font-size="21.51" font-weight="normal" fill="#000000" >Luna Longbottom</text>
<text transform="matrix(0.9774 0 0 1 680.68 749.5)" font-size="21.51" font-weight="normal" fill="#c80000" >06 15 15 15 15</text>
<text transform="matrix(1.0681 0 0 1 981.50 749.5)" font-size="21.51" font-weight="normal" fill="#000000" >08/11/2018</text>
<text transform="matrix(1.0386 0 0 1 1112.43 749.5)" font-size="21.51" font-weight="normal" fill="#000000" >08/11/2018 00:00</text>
<text transform="matrix(1.0030 0 0 1 1391.86 749.5)" font-size="21.51" font-weight="normal" fill="#c80000" >09:30:00</text>
<text transform="matrix(1.0666 0 0 1 1608.60 749.5)" font-size="21.51" font-weight="normal" fill="#c80000" >08/11</text>
<text transform="matrix(1.0411 0 0 1 1805.95 749.5)" font-size="21.51" font-weight="normal" fill="#c80000" >9h30</text>
<text transform="matrix(1.0031 0 0 1 1862.96 749.5)" font-size="21.51" font-weight="normal" fill="#000000" >1e</text>
<rect x="1887.5" y="739.5" width="1.5" height="10" fill="#c8a070" />
<text transform="matrix(0.9770 0 0 1 48.88 780.5)" font-size="21.51" font-weight="normal" fill="#000000" >06 07 07 00 00</text>
<text transform="matrix(1.0464 0 0 1 386.25 780.5)" font-size="21.51" font-weight="normal" fill="#000000" >Luna Longbottom</text>
<text transform="matrix(0.9774 0 0 1 680.68 780.5)" font-size="21.51" font-weight="normal" fill="#c80000" >06 15 15 15 15</text>
<text transform="matrix(1.0681 0 0 1 981.50 780.5)" font-size="21.51" font-weight="normal" fill="#000000" >08/11/2018</text>
<text transform="matrix(1.0386 0 0 1 1112.43 780.5)" font-size="21.51" font-weight="normal" fill="#000000" >08/11/2018 00:00</text>
<text transform="matrix(1.0030 0 0 1 1391.86 780.5)" font-size="21.51" font-weight="normal" fill="#c80000" >09:30:00</text>
<text transform="matrix(1.0666 0 0 1 1608.60 780.5)" font-size="21.51" font-weight="normal" fill="#c80000" >08/11</text>
<text transform="matrix(1.0411 0 0 1 1805.95 780.5)" font-size="21.51" font-weight="normal" fill="#c80000" >9h30</text>
<text transform="matrix(1.0031 0 0 1 1862.96 780.5)" font-size="21.51" font-weight="normal" fill="#000000" >1e</text>
<rect x="1887.5" y="770.5" width="1.5" height="10" fill="#c8a070" />
<text transform="matrix(0.9770 0 0 1 48.88 811.5)" font-size="21.51" font-weight="normal" fill="#000000" >06 07 07 00 00</text>
<text transform="matrix(1.0464 0 0 1 386.25 811.5)" font-size="21.51" font-weight="normal" fill="#000000" >Luna Longbottom</text>
<text transform="matrix(0.9774 0 0 1 680.68 811.5)" font-size="21.51" font-weight="normal" fill="#c80000" >06 15 15 15 15</text>
<text transform="matrix(1.0681 0 0 1 981.50 811.5)" font-size="21.51" font-weight="normal" fill="#000000" >08/11/2018</text>
<text transform="matrix(1.0386 0 0 1 1112.43 811.5)" font-size="21.51" font-weight="normal" fill="#000000" >08/11/2018 00:00</text>
<text transform="matrix(1.0030 0 0 1 1391.86 811.5)" font-size="21.51" font-weight="normal" fill="#c80000" >09:30:00</text>
<text transform="matrix(1.0666 0 0 1 1608.60 811.5)" font-size="21.51" font-weight="normal" fill="#c80000" >08/11</text>
<text transform="matrix(1.0411 0 0 1 1805.95 811.5)" font-size="21.51" font-weight="normal" fill="#c80000" >9h30</text>
<text transform="matrix(1.0031 0 0 1 1862.96 811.5)" font-size="21.51" font-weight="normal" fill="#000000" >1e</text>
<rect x="1887.5" y="801.5" width="1.5" height="10" fill="#c8a070" />
<text transform="matrix(0.9770 0 0 1 48.88 842.5)" font-size="21.51" font-weight="normal" fill="#000000" >06 07 07 00 00</text>
<text transform="matrix(1.0464 0 0 1 386.25 842.5)" font-size="21.51" font-weight="normal" fill="#000000" >Luna Longbottom</text>
<text transform="matrix(0.9774 0 0 1 680.68 842.5)" font-size="21.51" font-weight="normal" fill="#c80000" >06 15 15 15 15</text>
<text transform="matrix(1.0681 0 0 1 981.50 842.5)" font-size="21.51" font-weight="normal" fill="#000000" >05/11/2018</text>
<text transform="matrix(1.0386 0 0 1 1112.43 842.5)" font-size="21.51" font-weight="normal" fill="#000000" >05/11/2018 00:00</text>
<text transform="matrix(1.0030 0 0 1 1391.86 842.5)" font-size="21.51" font-weight="normal" fill="#c80000" >09:45:00</text>
<text transform="matrix(1.0666 0 0 1 1608.60 842.5)" font-size="21.51" font-weight="normal" fill="#c80000" >05/11</text>
<text transform="matrix(1.0230 0 0 1 1806.77 842.5)" font-size="21.51" font-weight="normal" fill="#c80000" >9h45</text>
<text transform="matrix(1.0031 0 0 1 1862.96 842.5)" font-size="21.51" font-weight="normal" fill="#000000" >1e</text>
<rect x="1887.5" y="832.5" width="1.5" height="10" fill="#c8a070" />
<text transform="matrix(0.9770 0 0 1 48.88 873.5)" font-size="21.51" font-weight="normal" fill="#000000" >06 07 07 00 00</text>
<text transform="matrix(1.0464 0 0 1 386.25 873.5)" font-size="21.51" font-weight="normal" fill="#000000" >Luna Longbottom</text>
<text transform="matrix(0.9774 0 0 1 680.68 873.5)" font-size="21.51" font-weight="normal" fill="#c80000" >06 15 15 15 15</text>
<text transform="matrix(1.0681 0 0 1 981.50 873.5)" font-size="21.51" font-weight="normal" fill="#000000" >05/11/2018</text>
<text transform="matrix(1.0386 0 0 1 1112.43 873.5)" font-size="21.51" font-weight="normal" fill="#000000" >05/11/2018 00:00</text>
<text transform="matrix(1.0067 0 0 1 1391.55 873.5)" font-size="21.51" font-weight="normal" fill="#c80000" >10:00:00</text>
<text transform="matrix(1.0666 0 0 1 1608.60 873.5)" font-size="21.51" font-weight="normal" fill="#c80000" >05/11</text>
<text transform="matrix(1.0074 0 0 1 1819.15 873.5)" font-size="21.51" font-weight="normal" fill="#c80000" >10h</text>
<text transform="matrix(1.0031 0 0 1 1862.96 873.5)" font-size="21.51" font-weight="normal" fill="#000000" >1e</text>
<rect x="1887.5" y="863.5" width="1.5" height="10" fill="#c8a070" />
<text transform="matrix(0.9770 0 0 1 48.88 904.5)" font-size="21.51" font-weight="normal" fill="#000000" >06 07 07 00 00</text>
<text transform="matrix(1.0464 0 0 1 386.25 904.5)" font-size="21.51" font-weight="normal" fill="#000000" >Luna Longbottom</text>
<text transform="matrix(0.9774 0 0 1 680.68 904.5)" font-size="21.51" font-weight="normal" fill="#c80000" >06 15 15 15 15</text>
<text transform="matrix(1.0681 0 0 1 981.50 904.5)" font-size="21.51" font-weight="normal" fill="#000000" >05/11/2018</text>
<text transform="matrix(1.0386 0 0 1 1112.43 904.5)" font-size="21.51" font-weight="normal" fill="#000000" >05/11/2018 00:00</text>
<text transform="matrix(1.0067 0 0 1 1391.55 904.5)" font-size="21.51" font-weight="normal" fill="#c80000" >10:00:00</text>
<text transform="matrix(1.0666 0 0 1 1608.60 904.5)" font-size="21.51" font-weight="normal" fill="#c80000" >05/11</text>
<text transform="matrix(1.0074 0 0 1 1819.15 904.5)" font-size="21.51" font-weight="normal" fill="#c80000" >10h</text>
<text transform="matrix(1.0031 0 0 1 1862.96 904.5)" font-size="21.51" font-weight="normal" fill="#000000" >1e</text>
<rect x="1887.5" y="894.5" width="1.5" height="10" fill="#c8a070" />
<text transform="matrix(0.9770 0 0 1 48.88 935.5)" font-size="21.51" font-weight="normal" fill="#000000" >06 07 07 00 00</text>
<text transform="matrix(1.0464 0 0 1 386.25 935.5)" font-size="21.51" font-weight="normal" fill="#000000" >Luna Longbottom</text>
<text transform="matrix(0.9774 0 0 1 680.68 935.5)" font-size="21.51" font-weight="normal" fill="#c80000" >06 15 15 15 15</text>
<text transform="matrix(1.0681 0 0 1 981.50 935.5)" font-size="21.51" font-weight="normal" fill="#000000" >05/11/2018</text>
<text transform="matrix(1.0386 0 0 1 1112.43 935.5)" font-size="21.51" font-weight="normal" fill="#000000" >05/11/2018 00:00</text>
<text transform="matrix(1.0067 0 0 1 1391.55 935.5)" font-size="21.51" font-weight="normal" fill="#c80000" >10:00:00</text>
<text transform="matrix(1.0666 0 0 1 1608.60 935.5)" font-size="21.51" font-weight="normal" fill="#c80000" >05/11</text>
<text transform="matrix(1.0074 0 0 1 1819.15 935.5)" font-size="21.51" font-weight="normal" fill="#c80000" >10h</text>
<text transform="matrix(1.0031 0 0 1 1862.96 935.5)" font-size="21.51" font-weight="normal" fill="#000000" >1e</text>
<rect x="1887.5" y="925.5" width="1.5" height="10" fill="#c8a070" />
<text transform="matrix(0.9770 0 0 1 48.88 966.5)" font-size="21.51" font-weight="normal" fill="#000000" >06 07 07 00 00</text>
<text transform="matrix(1.0464 0 0 1 386.25 966.5)" font-size="21.51" font-weight="normal" fill="#000000" >Luna Longbottom</text>
<text transform="matrix(0.9774 0 0 1 680.68 966.5)" font-size="21.51" font-weight="normal" fill="#c80000" >06 15 15 15 15</text>
<text transform="matrix(1.0681 0 0 1 981.50 966.5)" font-size="21.51" font-weight="normal" fill="#000000" >06/11/2018</text>
<text transform="matrix(1.0386 0 0 1 1112.43 966.5)" font-size="21.51" font-weight="normal" fill="#000000" >06/11/2018 00:00</text>
<text transform="matrix(1.0067 0 0 1 1391.55 966.5)" font-size="21.51" font-weight="normal" fill="#c80000" >10:00:00</text>
<text transform="matrix(1.0666 0 0 1 1608.60 966.5)" font-size="21.51" font-weight="normal" fill="#c80000" >06/11</text>
<text transform="matrix(1.0074 0 0 1 1819.15 966.5)" font-size="21.51" font-weight="normal" fill="#c80000" >10h</text>
<text transform="matrix(1.0031 0 0 1 1862.96 966.5)" font-size="21.51" font-weight="normal" fill="#000000" >1e</text>
<rect x="1887.5" y="956.5" width="1.5" height="10" fill="#c8a070" />
<text transform="matrix(0.9770 0 0 1 48.88 997.5)" font-size="21.51" font-weight="normal" fill="#000000" >06 07 07 00 00</text>
<text transform="matrix(1.0464 0 0 1 386.25 997.5)" font-size="21.51" font-weight="normal" fill="#000000" >Luna Longbottom</text>
<text transform="matrix(0.9774 0 0 1 680.68 997.5)" font-size="21.51" font-weight="normal" fill="#c80000" >06 15 15 15 15</text>
<text transform="matrix(1.0681 0 0 1 981.50 997.5)" font-size="21.51" font-weight="normal" fill="#000000" >06/11/2018</text>
<text transform="matrix(1.0386 0 0 1 1112.43 997.5)" font-size="21.51" font-weight="normal" fill="#000000" >06/11/2018 00:00</text>
<text transform="matrix(1.0067 0 0 1 1391.55 997.5)" font-size="21.51" font-weight="normal" fill="#c80000" >10:00:00</text>
<text transform="matrix(1.0666 0 0 1 1608.60 997.5)" font-size="21.51" font-weight="normal" fill="#c80000" >06/11</text>
<text transform="matrix(1.0074 0 0 1 1819.15 997.5)" font-size="21.51" font-weight="normal" fill="#c80000" >10h</text>
<text transform="matrix(1.0031 0 0 1 1862.96 997.5)" font-size="21.51" font-weight="normal" fill="#000000" >1e</text>
<rect x="1887.5" y="987.5" width="1.5" height="10" fill="#c8a070" />
</g>
<rect x="0" y="998" width="1920" height="32" fill="#f5f6f6" />
<rect x="0" y="1030" width="1920" height="1" fill="#ffffff" />
<path d="M35.1 1008 L29.1 1013.5 L35.1 1019 Z" fill="#c4c4c4"/>
<path d="M64 1008 L70 1013.5 L64 1019 Z" fill="#c4c4c4"/>
<rect x="118" y="1001" width="1" height="25" fill="#c0c0c0" />
<text transform="matrix(0.9560 0 0 1 131.45 1018.7)" font-size="19.77" font-weight="normal" fill="#444444" >Feuil1</text>
<rect x="199" y="997" width="81" height="30" fill="#ffffff" />
<rect x="199" y="1026" width="81" height="2" fill="#217346" />
<text transform="matrix(0.9872 0 0 1 210.38 1018.7)" font-size="20.06" font-weight="bold" fill="#217346" >Feuil2</text>
<circle cx="330" cy="1013.7" r="10.3" fill="none" stroke="#777777" stroke-width="1.4"/>
<path d="M324.5 1013.7 L335.5 1013.7 M330 1008.2 L330 1019.2" stroke="#777777" stroke-width="1.6"/>
<rect x="960" y="1008.5" width="3" height="3" fill="#8a8a8a" />
<rect x="960" y="1013.5" width="3" height="3" fill="#8a8a8a" />
<rect x="960" y="1018.5" width="3" height="3" fill="#8a8a8a" />
<rect x="980" y="1001" width="887" height="25" fill="#e8e8e8" />
<rect x="980.5" y="1001.5" width="24" height="24" fill="#ffffff" stroke="#c6c6c6" stroke-width="1"/>
<path d="M995 1008.5 L989 1013.7 L995 1019 Z" fill="#777777"/>
<rect x="1005.5" y="1001.5" width="306" height="24" fill="#ffffff" stroke="#ababab" stroke-width="1"/>
<rect x="1866.5" y="1001.5" width="24" height="24" fill="#ffffff" stroke="#c6c6c6" stroke-width="1"/>
<path d="M1876 1008.5 L1882 1013.7 L1876 1019 Z" fill="#777777"/>
<rect x="1892" y="225" width="25" height="772" fill="#f0f0f0" />
<rect x="1892.5" y="200.5" width="24" height="24" fill="#ffffff" stroke="#c6c6c6" stroke-width="1"/>
<path d="M1899 215 L1904.5 209 L1910 215 Z" fill="#777777"/>
<rect x="1892.5" y="225.5" width="24" height="192" fill="#ffffff" stroke="#ababab" stroke-width="1"/>
<rect x="1892.5" y="974.5" width="24" height="24" fill="#ffffff" stroke="#c6c6c6" stroke-width="1"/>
<path d="M1899 984 L1910 984 L1904.5 990 Z" fill="#777777"/>
<rect x="0" y="1031" width="1920" height="47" fill="#217346" />
<rect x="0" y="1078" width="1920" height="2" fill="#0f1f19" />
<rect x="395" y="1078" width="55" height="2" fill="#555555" />
<text transform="matrix(0.8805 0 0 1 12.81 1061)" font-size="15.12" font-weight="normal" fill="#ffffff" >PRÊT</text>
<circle cx="88.5" cy="1049.5" r="4.5" fill="#e0e6e2"/>
<path d="M86.5 1055.5 L86.5 1063.5 L104 1063.5 L104 1047.5 L94 1047.5" fill="none" stroke="#ffffff" stroke-width="1"/>
<rect x="94" y="1047" width="10" height="2.5" fill="#e8e8e8" />
<rect x="89" y="1054.2" width="3.3" height="1.2" fill="#ffffff" />
<rect x="93.7" y="1054.2" width="3.3" height="1.2" fill="#ffffff" />
<rect x="98.1" y="1054.2" width="3.3" height="1.2" fill="#ffffff" />
<rect x="89" y="1057.3" width="3.3" height="1.2" fill="#ffffff" />
<rect x="93.7" y="1057.3" width="3.3" height="1.2" fill="#ffffff" />
<rect x="98.1" y="1057.3" width="3.3" height="1.2" fill="#ffffff" />
<rect x="89" y="1060.3" width="3.3" height="1.2" fill="#ffffff" />
<rect x="93.7" y="1060.3" width="3.3" height="1.2" fill="#ffffff" />
<rect x="98.1" y="1060.3" width="3.3" height="1.2" fill="#ffffff" />
<text transform="matrix(1.0205 0 0 1 891.25 1061)" font-size="14.97" font-weight="normal" fill="#ffffff" >MOYENNE : 28940,32594</text>
<text transform="matrix(1.0077 0 0 1 1098.56 1061)" font-size="14.97" font-weight="normal" fill="#ffffff" >NB (NON VIDES) : 1290</text>
<text transform="matrix(1.0275 0 0 1 1290.90 1061)" font-size="14.97" font-weight="normal" fill="#ffffff" >SOMME : 7987529,958</text>
<rect x="1480" y="1031" width="56" height="47" fill="#0e6b37" />
<g fill="none" stroke="#ffffff" stroke-width="1">
<rect x="1495.5" y="1043.5" width="24" height="24"/>
<path d="M1503.5 1043.5 V1067.5 M1511.5 1043.5 V1067.5 M1495.5 1051.5 H1519.5 M1495.5 1059.5 H1519.5"/>
<rect x="1551.5" y="1043.5" width="25" height="24"/><rect x="1557.5" y="1047.5" width="13" height="16"/>
<path d="M1560 1051.5 H1568 M1560 1054.5 H1568 M1560 1057.5 H1568 M1560 1060.5 H1568"/>
<rect x="1607.5" y="1044.5" width="25" height="23"/>
</g>
<rect x="1608" y="1045" width="7" height="14" fill="#e4e4e4" />
<rect x="1616" y="1045" width="8" height="14" fill="#e4e4e4" />
<rect x="1653.7" y="1053" width="11.3" height="3" fill="#ffffff" />
<rect x="1670" y="1054" width="150" height="1" fill="#ffffff" />
<rect x="1742" y="1046.3" width="6" height="16.2" fill="#ffffff" />
<rect x="1825" y="1053.3" width="13.7" height="3" fill="#ffffff" />
<rect x="1830.3" y="1048.3" width="3" height="13.4" fill="#ffffff" />
<text transform="matrix(1.0525 0 0 1 1862.11 1061)" font-size="14.83" font-weight="normal" fill="#ffffff" >100 %</text>
</svg>
</body></html>
